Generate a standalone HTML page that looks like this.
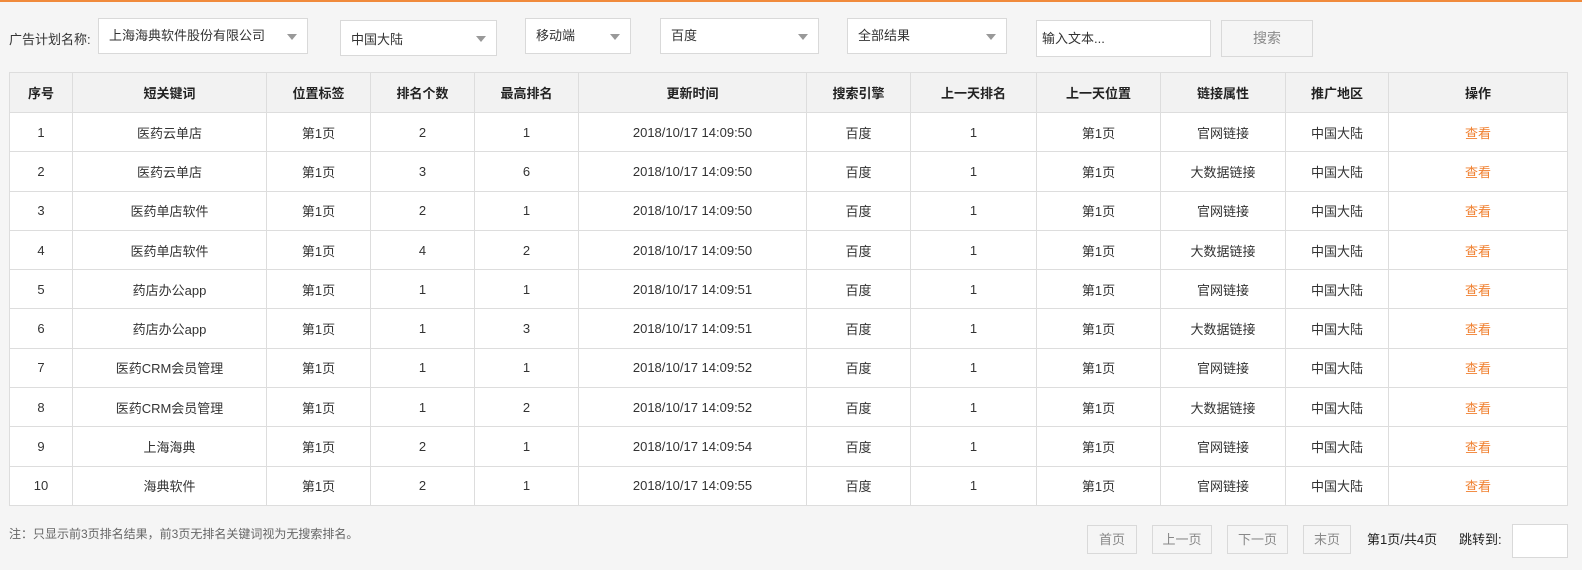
<!DOCTYPE html>
<html><head><meta charset="utf-8"><style>
*{box-sizing:border-box;margin:0;padding:0}
body{width:1582px;height:570px;background:#f5f5f5;border-top:2px solid #f08a3c;font-family:"Liberation Sans","Noto Sans CJK SC",sans-serif;font-size:13px;color:#333;position:relative;overflow:hidden}
.a{position:absolute}
.sel{position:absolute;background:#fff;border:1px solid #d9d9d9;height:36px;line-height:34px;padding-left:10px;color:#333}
.sel:after{content:"";position:absolute;right:10px;top:15px;border-left:5px solid transparent;border-right:5px solid transparent;border-top:6px solid #999}
table{position:absolute;left:9px;top:70px;width:1558px;border-collapse:collapse;background:#fff;table-layout:fixed}
td,th{border:1px solid #ddd;text-align:center;height:39.3px;padding:0;font-size:13px}
th{background:#f2f2f2;height:40px;font-weight:bold;color:#222}
td.l{color:#f08030}
.pb{position:absolute;top:523px;height:29px;border:1px solid #d9d9d9;color:#888;line-height:27px;text-align:center;background:#f5f5f5}
</style></head><body>
<div class="a" style="left:9px;top:28px;line-height:20px">广告计划名称:</div>
<div class="sel" style="left:98px;top:16px;width:210px">上海海典软件股份有限公司</div>
<div class="sel" style="left:340px;top:18px;width:157px;line-height:38px">中国大陆</div>
<div class="sel" style="left:525px;top:16px;width:106px">移动端</div>
<div class="sel" style="left:660px;top:16px;width:159px">百度</div>
<div class="sel" style="left:847px;top:16px;width:160px">全部结果</div>
<div class="a" style="left:1036px;top:18px;width:175px;height:37px;background:#fff;border:1px solid #d9d9d9;line-height:35px;padding-left:5px">输入文本...</div>
<div class="a" style="left:1221px;top:18px;width:92px;height:37px;border:1px solid #d9d9d9;line-height:35px;text-align:center;color:#888;font-size:14px">搜索</div>
<table>
<colgroup><col style="width:63px"><col style="width:194px"><col style="width:104px"><col style="width:104px"><col style="width:104px"><col style="width:228px"><col style="width:104px"><col style="width:126px"><col style="width:124px"><col style="width:125px"><col style="width:103px"><col style="width:179px"></colgroup>
<tr><th>序号</th><th>短关键词</th><th>位置标签</th><th>排名个数</th><th>最高排名</th><th>更新时间</th><th>搜索引擎</th><th>上一天排名</th><th>上一天位置</th><th>链接属性</th><th>推广地区</th><th>操作</th></tr>
<tr><td>1</td><td>医药云单店</td><td>第1页</td><td>2</td><td>1</td><td>2018/10/17 14:09:50</td><td>百度</td><td>1</td><td>第1页</td><td>官网链接</td><td>中国大陆</td><td class="l">查看</td></tr>
<tr><td>2</td><td>医药云单店</td><td>第1页</td><td>3</td><td>6</td><td>2018/10/17 14:09:50</td><td>百度</td><td>1</td><td>第1页</td><td>大数据链接</td><td>中国大陆</td><td class="l">查看</td></tr>
<tr><td>3</td><td>医药单店软件</td><td>第1页</td><td>2</td><td>1</td><td>2018/10/17 14:09:50</td><td>百度</td><td>1</td><td>第1页</td><td>官网链接</td><td>中国大陆</td><td class="l">查看</td></tr>
<tr><td>4</td><td>医药单店软件</td><td>第1页</td><td>4</td><td>2</td><td>2018/10/17 14:09:50</td><td>百度</td><td>1</td><td>第1页</td><td>大数据链接</td><td>中国大陆</td><td class="l">查看</td></tr>
<tr><td>5</td><td>药店办公app</td><td>第1页</td><td>1</td><td>1</td><td>2018/10/17 14:09:51</td><td>百度</td><td>1</td><td>第1页</td><td>官网链接</td><td>中国大陆</td><td class="l">查看</td></tr>
<tr><td>6</td><td>药店办公app</td><td>第1页</td><td>1</td><td>3</td><td>2018/10/17 14:09:51</td><td>百度</td><td>1</td><td>第1页</td><td>大数据链接</td><td>中国大陆</td><td class="l">查看</td></tr>
<tr><td>7</td><td>医药CRM会员管理</td><td>第1页</td><td>1</td><td>1</td><td>2018/10/17 14:09:52</td><td>百度</td><td>1</td><td>第1页</td><td>官网链接</td><td>中国大陆</td><td class="l">查看</td></tr>
<tr><td>8</td><td>医药CRM会员管理</td><td>第1页</td><td>1</td><td>2</td><td>2018/10/17 14:09:52</td><td>百度</td><td>1</td><td>第1页</td><td>大数据链接</td><td>中国大陆</td><td class="l">查看</td></tr>
<tr><td>9</td><td>上海海典</td><td>第1页</td><td>2</td><td>1</td><td>2018/10/17 14:09:54</td><td>百度</td><td>1</td><td>第1页</td><td>官网链接</td><td>中国大陆</td><td class="l">查看</td></tr>
<tr><td>10</td><td>海典软件</td><td>第1页</td><td>2</td><td>1</td><td>2018/10/17 14:09:55</td><td>百度</td><td>1</td><td>第1页</td><td>官网链接</td><td>中国大陆</td><td class="l">查看</td></tr>
</table>
<div class="a" style="left:9px;top:522px;color:#666;font-size:12px;line-height:20px">注：只显示前3页排名结果，前3页无排名关键词视为无搜索排名。</div>
<div class="pb" style="left:1087px;width:50px">首页</div>
<div class="pb" style="left:1152px;width:60px">上一页</div>
<div class="pb" style="left:1227px;width:61px">下一页</div>
<div class="pb" style="left:1303px;width:48px">末页</div>
<div class="a" style="left:1367px;top:528px;line-height:20px;color:#222">第1页/共4页</div>
<div class="a" style="left:1459px;top:528px;line-height:20px;color:#222">跳转到:</div>
<div class="a" style="left:1512px;top:522px;width:56px;height:34px;background:#fff;border:1px solid #d9d9d9"></div>
</body></html>
